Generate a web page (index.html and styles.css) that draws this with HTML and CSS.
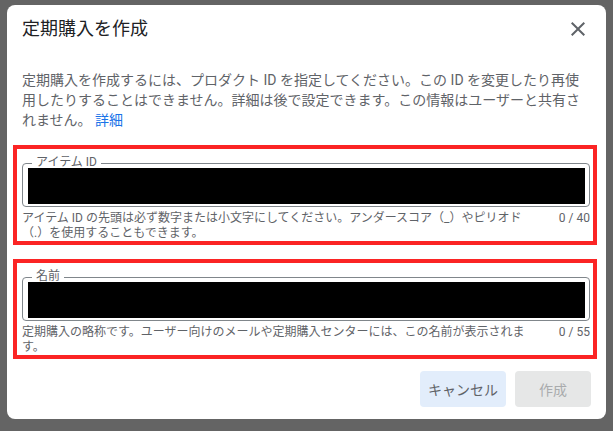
FILE: index.html
```html
<!DOCTYPE html>
<html lang="ja">
<head>
    <meta charset="UTF-8">
    <title>定期購入を作成</title>
    <link rel="stylesheet" href="styles.css">
</head>
<body>

    <div class="dialog">
        <!-- ヘッダー -->
        <div class="dialog-header">
            <h2 class="dialog-title">定期購入を作成</h2>
            <button class="close-btn" aria-label="閉じる">
                <svg width="24" height="24" viewBox="0 0 24 24">
                    <path d="M19 6.41L17.59 5 12 10.59 6.41 5 5 6.41 10.59 12 5 17.59 6.41 19 12 13.41 17.59 19 19 17.59 13.41 12z" fill="#5f6368"/>
                </svg>
            </button>
        </div>

        <p class="dialog-desc">定期購入を作成するには、プロダクト ID を指定してください。この ID を変更したり再使用したりすることはできません。詳細は後で設定できます。この情報はユーザーと共有されません。 <a href="#">詳細</a></p>

        <!-- アイテム ID -->
        <div class="field-mark">
            <fieldset class="field">
                <legend>アイテム ID</legend>
                <div class="field-input"></div>
            </fieldset>
            <div class="field-hint">
                <span class="hint-text">アイテム ID の先頭は必ず数字または小文字にしてください。アンダースコア（_）やピリオド（.）を使用することもできます。</span>
                <span class="hint-count">0 / 40</span>
            </div>
        </div>

        <!-- 名前 -->
        <div class="field-mark second">
            <fieldset class="field">
                <legend>名前</legend>
                <div class="field-input"></div>
            </fieldset>
            <div class="field-hint">
                <span class="hint-text">定期購入の略称です。ユーザー向けのメールや定期購入センターには、この名前が表示されます。</span>
                <span class="hint-count">0 / 55</span>
            </div>
        </div>

        <!-- ボタン -->
        <div class="dialog-actions">
            <button class="btn btn-cancel">キャンセル</button>
            <button class="btn btn-create" disabled>作成</button>
        </div>
    </div>

</body>
</html>
```

FILE: styles.css
```css
body {
    font-family: Roboto, "Noto Sans CJK JP", sans-serif;
    margin: 0;
    padding: 0;
    background-color: #646464;
    height: 431px;
    overflow: hidden;
}

.dialog {
    box-sizing: border-box;
    width: 599px;
    height: 414px;
    margin: 5px 0 0 7px;
    padding: 0 15px;
    background-color: #ffffff;
    border-radius: 8px;
}

.dialog-header {
    display: flex;
    justify-content: space-between;
    align-items: center;
    padding-top: 12px;
}

.dialog-title {
    margin: 0;
    font-size: 18px;
    font-weight: 400;
    line-height: 24px;
    color: #202124;
}

.close-btn {
    width: 24px;
    height: 24px;
    padding: 0;
    margin-right: 1px;
    border: none;
    background: none;
    cursor: pointer;
}

.close-btn svg {
    display: block;
}

.dialog-desc {
    margin: 29px 0 0;
    font-size: 14px;
    line-height: 20px;
    color: #5f6368;
}

.dialog-desc a {
    color: #1a73e8;
    text-decoration: none;
}

/* 赤枠 */
.field-mark {
    margin: 15px -6px 0 -9px;
    padding: 9px 3px 0 5px;
    border: 4px solid #fb2424;
}

.field-mark.second {
    margin-top: 14px;
}

.field {
    margin: 0;
    min-width: 0;
    padding: 0 4px 2px 5px;
    border: 1px solid #80868b;
    border-radius: 4px;
}

.field legend {
    margin-left: 4px;
    padding: 0 4px 2px;
    font-size: 12px;
    line-height: 8px;
    color: #5f6368;
}

.field-input {
    height: 36px;
    background-color: #000000;
}

.field-hint {
    display: flex;
    margin-top: 4px;
    font-size: 12px;
    line-height: 15px;
    color: #5f6368;
}

.hint-text {
    flex: 1;
}

.hint-count {
    margin-left: 20px;
    white-space: nowrap;
}

.dialog-actions {
    display: flex;
    justify-content: flex-end;
    gap: 9px;
    margin-top: 12px;
}

.btn {
    height: 36px;
    min-width: 76px;
    padding: 0 8px;
    border: none;
    border-radius: 4px;
    font-family: Roboto, "Noto Sans CJK JP", sans-serif;
    font-size: 14px;
    font-weight: 400;
    cursor: pointer;
}

.btn-cancel {
    background-color: #e2edfb;
    color: #5f6368;
}

.btn-create {
    background-color: #e6e7e7;
    color: #a9abad;
    cursor: default;
}
```
